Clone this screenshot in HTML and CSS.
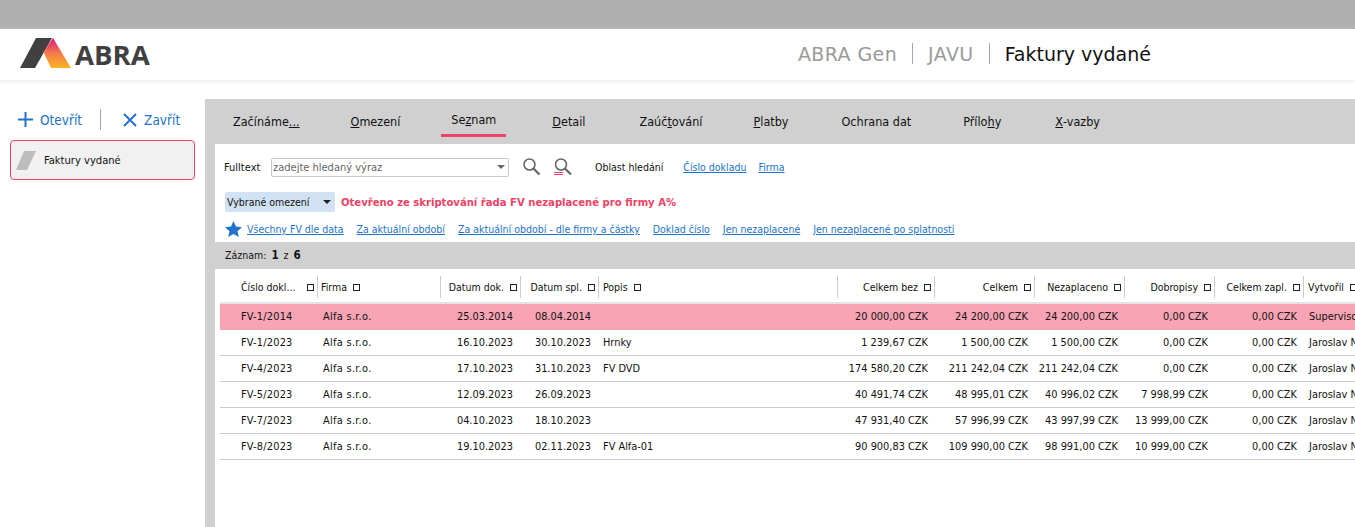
FILE: index.html

```html
<!DOCTYPE html>
<html lang="en">
<head>
    <meta charset="UTF-8">
    <title>Faktury vydané</title>
    <link rel="stylesheet" href="styles.css">
</head>
<body>
<div class="topbar"></div>
<header class="header">
    <div class="logo">
        <svg width="52" height="31" viewBox="0 0 52 31">
            <defs>
                <linearGradient id="logograd" x1="0" y1="0" x2="0" y2="1">
                    <stop offset="0" stop-color="#e0107e"/>
                    <stop offset="0.5" stop-color="#f47a4c"/>
                    <stop offset="1" stop-color="#fbb423"/>
                </linearGradient>
            </defs>
            <polygon points="0,30 16,0 32,0 15,30" fill="#404040"/>
            <polygon points="33,0 51,30 31,30 23.500,14" fill="url(#logograd)"/>
        </svg>
        <span class="logo-text">ABRA</span>
    </div>
    <div class="crumbs">
        <span class="crumb">ABRA Gen</span>
        <span class="crumb-sep"></span>
        <span class="crumb">JAVU</span>
        <span class="crumb-sep"></span>
        <span class="crumb crumb-current">Faktury vydané</span>
    </div>
</header>

<div class="page">
    <aside class="side">
        <div class="side-actions">
            <button class="side-btn">
                <svg width="15" height="15" viewBox="0 0 15 15"><path d="M7.500 0v15M0 7.500h15" stroke="#2273c9" stroke-width="2" fill="none"/></svg>
                Otevřít
            </button>
            <span class="side-sep"></span>
            <button class="side-btn">
                <svg width="14" height="14" viewBox="0 0 14 14"><path d="M1 1l12 12M13 1L1 13" stroke="#2273c9" stroke-width="2" fill="none"/></svg>
                Zavřít
            </button>
        </div>
        <div class="side-item">
            <svg width="20" height="19" viewBox="0 0 20 19"><polygon points="0,19 8,0 20,0 11,19" fill="#bdbdbd"/></svg>
            <span>Faktury vydané</span>
        </div>
    </aside>

    <main class="main">
        <nav class="tabs">
            <a class="tab">Začínáme<u>...</u></a>
            <a class="tab"><u>O</u>mezení</a>
            <a class="tab tab-active">Se<u>z</u>nam</a>
            <a class="tab"><u>D</u>etail</a>
            <a class="tab">Zaúč<u>t</u>ování</a>
            <a class="tab"><u>P</u>latby</a>
            <a class="tab">Ochrana dat</a>
            <a class="tab">Přílo<u>h</u>y</a>
            <a class="tab"><u>X</u>-vazby</a>
        </nav>

        <div class="content">
            <section class="filters">
                <div class="search-row">
                    <span class="search-label">Fulltext</span>
                    <div class="search-box">
                        <span>zadejte hledaný výraz</span>
                        <span class="arrow arrow-gray"></span>
                    </div>
                    <svg class="search-icon" width="18" height="18" viewBox="0 0 18 18"><circle cx="6.500" cy="6.500" r="5.500" fill="none" stroke="#666" stroke-width="1.600"/><path d="M10.500 10.500l6 6" stroke="#666" stroke-width="2.200"/></svg>
                    <svg class="search-icon2" width="18" height="19" viewBox="0 0 18 19"><circle cx="7" cy="6.500" r="5.500" fill="none" stroke="#666" stroke-width="1.600"/><path d="M11 10.500l6 6" stroke="#666" stroke-width="2.200"/><path d="M0 14.500h9M0 16.500h9" stroke="#ee4266" stroke-width="1"/></svg>
                    <span class="search-area">Oblast hledání</span>
                    <a class="link">Číslo dokladu</a>
                    <a class="link">Firma</a>
                </div>
                <div class="limit-row">
                    <div class="limit-select">Vybrané omezení<span class="arrow"></span></div>
                    <span class="limit-note">Otevřeno ze skriptování řada FV nezaplacené pro firmy A%</span>
                </div>
                <div class="fav-row">
                    <svg width="17" height="16" viewBox="0 0 17 16"><polygon points="8.500,0 11,5.500 17,6.200 12.500,10.300 13.800,16 8.500,13.100 3.200,16 4.500,10.300 0,6.200 6,5.500" fill="#2273c9"/></svg>
                    <a class="link">Všechny FV dle data</a>
                    <a class="link">Za aktuální období</a>
                    <a class="link">Za aktuální období - dle firmy a částky</a>
                    <a class="link">Doklad číslo</a>
                    <a class="link">Jen nezaplacené</a>
                    <a class="link">Jen nezaplacené po splatnosti</a>
                </div>
            </section>

            <div class="records">Záznam: <b>1</b> z <b>6</b></div>

            <div class="grid">
                <div class="row row-head">
                    <div class="th"><span>Číslo dokl...</span><i class="box box-end"></i></div>
                    <div class="th"><span>Firma</span><i class="box"></i></div>
                    <div class="th th-r"><span>Datum dok.</span><i class="box"></i></div>
                    <div class="th th-r"><span>Datum spl.</span><i class="box"></i></div>
                    <div class="th th-popis"><span>Popis</span><i class="box"></i></div>
                    <div class="th th-r"><span>Celkem bez</span><i class="box"></i></div>
                    <div class="th th-r"><span>Celkem</span><i class="box"></i></div>
                    <div class="th th-r"><span>Nezaplaceno</span><i class="box"></i></div>
                    <div class="th th-r"><span>Dobropisy</span><i class="box"></i></div>
                    <div class="th th-r"><span>Celkem zapl.</span><i class="box"></i></div>
                    <div class="th th-last"><span>Vytvořil</span><i class="box"></i></div>
                </div>

                <div class="row row-hl">
                    <div class="td">FV-1/2014</div><div class="td firma">Alfa s.r.o.</div><div class="td r date">25.03.2014</div><div class="td r date">08.04.2014</div><div class="td"></div>
                    <div class="td r">20 000,00 CZK</div><div class="td r">24 200,00 CZK</div><div class="td r">24 200,00 CZK</div><div class="td r">0,00 CZK</div><div class="td r">0,00 CZK</div><div class="td user">Supervisor</div>
                </div>
                <div class="row">
                    <div class="td">FV-1/2023</div><div class="td firma">Alfa s.r.o.</div><div class="td r date">16.10.2023</div><div class="td r date">30.10.2023</div><div class="td">Hrnky</div>
                    <div class="td r">1 239,67 CZK</div><div class="td r">1 500,00 CZK</div><div class="td r">1 500,00 CZK</div><div class="td r">0,00 CZK</div><div class="td r">0,00 CZK</div><div class="td user">Jaroslav N</div>
                </div>
                <div class="row">
                    <div class="td">FV-4/2023</div><div class="td firma">Alfa s.r.o.</div><div class="td r date">17.10.2023</div><div class="td r date">31.10.2023</div><div class="td">FV DVD</div>
                    <div class="td r">174 580,20 CZK</div><div class="td r">211 242,04 CZK</div><div class="td r">211 242,04 CZK</div><div class="td r">0,00 CZK</div><div class="td r">0,00 CZK</div><div class="td user">Jaroslav N</div>
                </div>
                <div class="row">
                    <div class="td">FV-5/2023</div><div class="td firma">Alfa s.r.o.</div><div class="td r date">12.09.2023</div><div class="td r date">26.09.2023</div><div class="td"></div>
                    <div class="td r">40 491,74 CZK</div><div class="td r">48 995,01 CZK</div><div class="td r">40 996,02 CZK</div><div class="td r">7 998,99 CZK</div><div class="td r">0,00 CZK</div><div class="td user">Jaroslav N</div>
                </div>
                <div class="row">
                    <div class="td">FV-7/2023</div><div class="td firma">Alfa s.r.o.</div><div class="td r date">04.10.2023</div><div class="td r date">18.10.2023</div><div class="td"></div>
                    <div class="td r">47 931,40 CZK</div><div class="td r">57 996,99 CZK</div><div class="td r">43 997,99 CZK</div><div class="td r">13 999,00 CZK</div><div class="td r">0,00 CZK</div><div class="td user">Jaroslav N</div>
                </div>
                <div class="row">
                    <div class="td">FV-8/2023</div><div class="td firma">Alfa s.r.o.</div><div class="td r date">19.10.2023</div><div class="td r date">02.11.2023</div><div class="td">FV Alfa-01</div>
                    <div class="td r">90 900,83 CZK</div><div class="td r">109 990,00 CZK</div><div class="td r">98 991,00 CZK</div><div class="td r">10 999,00 CZK</div><div class="td r">0,00 CZK</div><div class="td user">Jaroslav N</div>
                </div>
            </div>
        </div>
    </main>
</div>
</body>
</html>
```

FILE: styles.css

```css
* {
    box-sizing: border-box;
}
html, body {
    height: 527px;
    overflow: hidden;
}
body {
    margin: 0;
    background-color: white;
    color: #111;
    font-family: "DejaVu Sans Condensed", "DejaVu Sans", sans-serif;
    font-stretch: condensed;
    font-size: 11px;
}
a {
    cursor: pointer;
}

.topbar {
    height: 29px;
    background-color: #b0b0b0;
}

/* hlavicka */
.header {
    height: 51px;
    display: flex;
    align-items: center;
    justify-content: space-between;
    padding: 0 204px 0 20px;
    box-shadow: 0 2px 4px #eee;
}
.logo {
    display: flex;
    align-items: center;
    gap: 3px;
    margin-top: -2px;
}
.logo-text {
    font-family: "Open Sans", sans-serif;
    font-stretch: normal;
    font-size: 27.600px;
    font-weight: 700;
    color: #404040;
}
.crumbs {
    display: flex;
    align-items: center;
    margin-top: -2px;
    font-family: "DejaVu Sans", sans-serif;
    font-stretch: normal;
    font-size: 19px;
}
.crumb {
    color: #9a9a9a;
    letter-spacing: 0.4px;
}
.crumb-current {
    color: #111;
    letter-spacing: 0;
}
.crumb-sep {
    width: 1px;
    height: 21px;
    margin: 0 15px;
    background-color: #a5a5bd;
}

.page {
    display: flex;
    margin-top: 19px;
    height: 448px;
}

/* levy panel */
.side {
    width: 205px;
    flex-shrink: 0;
    padding: 0 10px;
}
.side-actions {
    display: flex;
    align-items: center;
    height: 41px;
    padding-left: 8px;
}
.side-btn {
    display: flex;
    align-items: center;
    gap: 7px;
    padding: 0;
    border: none;
    background: none;
    color: #2273c9;
    font: inherit;
    font-size: 13.500px;
}
.side-sep {
    width: 1px;
    height: 21px;
    margin: 0 22px 0 18px;
    background-color: #a5a5bd;
}
.side-item {
    display: flex;
    align-items: center;
    gap: 8px;
    height: 40px;
    padding-left: 5px;
    border: 1px solid #ee4266;
    border-radius: 4px;
    background-color: #f1f1f1;
    font-size: 11.100px;
}

/* hlavni cast */
.main {
    flex: 1;
    min-width: 0;
    background-color: #d0d0d0;
}
.tabs {
    display: flex;
    gap: 33px;
    height: 45px;
    padding-left: 18px;
}
.tab {
    display: flex;
    align-items: center;
    height: 38px;
    padding: 6px 10px 0;
    font-size: 12.500px;
}
/* mezery mezi zalozkami nejsou v originale stejne */
.tab:nth-child(1),
.tab:nth-child(2) {
    margin-right: -2px;
}
.tab:nth-child(3) {
    margin-right: 3px;
}
.tab:nth-child(4) {
    margin-right: 1px;
}
.tab:nth-child(5) {
    margin-right: -2px;
}
.tab:nth-child(7) {
    margin-right: -1px;
}
.tab:nth-child(8) {
    margin-right: 1px;
}
.tab-active {
    border-bottom: 3px solid #ee4266;
}
.content {
    margin-left: 10px;
    height: 403px;
    background-color: white;
}

.filters {
    height: 98px;
    padding: 13px 0 0 9px;
}
.search-row {
    display: flex;
    align-items: center;
    height: 20px;
}
.search-label {
    width: 47px;
}
.search-box {
    display: flex;
    align-items: center;
    justify-content: space-between;
    width: 238px;
    height: 19px;
    padding: 0 3px 0 1px;
    border: 1px solid #c8c8c8;
    border-radius: 2px;
    color: #666;
}
.arrow {
    width: 0;
    height: 0;
    border-left: 4px solid transparent;
    border-right: 4px solid transparent;
    border-top: 4px solid #222;
}
.arrow-gray {
    border-top-color: #666;
}
.search-icon {
    margin-left: 14px;
}
.search-icon2 {
    margin-left: 13px;
}
.search-area {
    margin-left: 23px;
    font-size: 10.500px;
}
.link {
    margin-left: 13px;
    color: #2273c9;
    font-size: 10.500px;
    text-decoration: underline;
}
.search-row .link:first-of-type {
    margin-left: 20px;
}
.search-row .link:last-of-type {
    margin-left: 12px;
}
.limit-row {
    display: flex;
    align-items: center;
    margin-top: 15px;
    gap: 6px;
}
.limit-select {
    display: flex;
    align-items: center;
    justify-content: space-between;
    width: 110px;
    height: 20px;
    margin-left: 1px;
    padding: 0 4px 0 2px;
    border-radius: 2px;
    background-color: #d0e2f4;
    font-size: 10.500px;
}
.limit-note {
    color: #ee4266;
    font-size: 11.200px;
    font-weight: 700;
}
.fav-row {
    display: flex;
    align-items: center;
    margin-top: 8px;
    height: 18px;
    margin-left: 1px;
}
.fav-row .link:first-of-type {
    margin-left: 5px;
}

.records {
    height: 27px;
    display: flex;
    align-items: center;
    gap: 5px;
    padding: 0 0 2px 10px;
    background-color: #d0d0d0;
    font-size: 10.500px;
}
.records b {
    font-size: 11.500px;
    font-stretch: normal;
}

/* tabulka */
.grid {
    margin-left: 5px;
    overflow: hidden;
    font-size: 10.900px;
}
.row {
    display: grid;
    grid-template-columns: 98px 123px 80px 78px 239px 97px 100px 90px 90px 89px 51px;
    height: 26px;
    border-bottom: 1px solid #ccc;
}
.row-head {
    height: 35px;
    padding-top: 7px;
    border-bottom: 2px solid #e4e4e4;
    font-size: 10.500px;
}
.row-hl {
    background-color: #f8a4b4;
    border-bottom-color: #f8a4b4;
}
.th {
    display: flex;
    align-items: center;
    gap: 6px;
    height: 22px;
    padding-left: 3px;
    padding-right: 3px;
    border-right: 1px solid #ccc;
    white-space: nowrap;
}
.th:first-child {
    padding-left: 21px;
}
.th-r {
    justify-content: flex-end;
}
.th-popis {
    padding-left: 4px;
}
.th-last {
    border-right: none;
    overflow: hidden;
    padding-left: 4px;
}
.box-end {
    margin-left: auto;
}
.box {
    flex-shrink: 0;
    width: 7px;
    height: 7px;
    border: 1px solid #222;
}
.td {
    display: flex;
    align-items: center;
    padding-left: 4px;
    padding-right: 7px;
    white-space: nowrap;
    overflow: hidden;
}
.td:first-child {
    padding-left: 21px;
    letter-spacing: 0.2px;
}
.firma {
    padding-left: 5px;
    letter-spacing: 0.3px;
}
.user {
    padding-left: 5px;
    padding-right: 0;
}
.r {
    justify-content: flex-end;
}
.date {
    padding-right: 8px;
}
```
